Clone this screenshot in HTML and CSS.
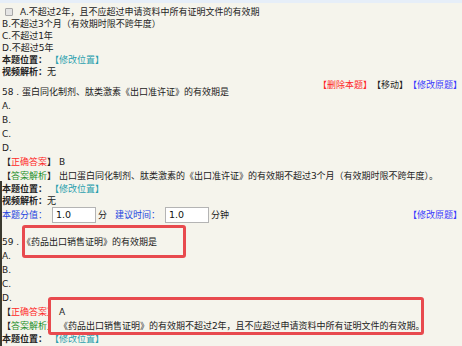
FILE: index.html
```html
<!DOCTYPE html>
<html lang="zh-CN">
<head>
<meta charset="utf-8">
<title>题目</title>
<link rel="stylesheet" href="styles.css">
</head>
<body>
<div class="topbar"></div>
<div class="page">
  <div class="edge"></div>

  <div class="row first"><span class="cb"></span>A.不超过2年，且不应超过申请资料中所有证明文件的有效期</div>
  <div class="row r12">B.不超过3个月（有效期时限不跨年度）</div>
  <div class="row r12">C.不超过1年</div>
  <div class="row r12">D.不超过5年</div>
  <div class="row r12"><b class="lbl">本题位置：</b> <span class="teal">【修改位置】</span></div>
  <div class="row r12"><b class="lbl">视频解析：</b>无</div>

  <div class="ops"><span class="red">【删除本题】</span><span>【移动】</span><span class="blue">【修改原题】</span></div>

  <div class="row">58 . 蛋白同化制剂、肽类激素《出口准许证》的有效期是</div>
  <div class="row">A.</div>
  <div class="row">B.</div>
  <div class="row">C.</div>
  <div class="row">D.</div>
  <div class="row">【<span class="red">正确答案</span>】 B</div>
  <div class="row">【<span class="green">答案解析</span>】 出口蛋白同化制剂、肽类激素的《出口准许证》的有效期不超过3个月（有效期时限不跨年度）。</div>
  <div class="row r12"><b class="lbl">本题位置：</b> <span class="teal">【修改位置】</span></div>
  <div class="row r12"><b class="lbl">视频解析：</b>无</div>
  <div class="score">
    <span class="blue-lbl">本题分值：</span>
    <span class="inp">1.0</span>
    <span class="unit">分</span>
    <span class="blue-lbl gap">建议时间：</span>
    <span class="inp">1.0</span>
    <span class="unit">分钟</span>
    <span class="spacer"></span>
    <span class="blue">【修改原题】</span>
  </div>

  <div class="row q59">59 . 《药品出口销售证明》的有效期是</div>
  <div class="row">A.</div>
  <div class="row">B.</div>
  <div class="row">C.</div>
  <div class="row">D.</div>
  <div class="row">【<span class="red">正确答案</span>】 A</div>
  <div class="row">【<span class="green">答案解析</span>】 《药品出口销售证明》的有效期不超过2年，且不应超过申请资料中所有证明文件的有效期。</div>
  <div class="row r12"><b class="lbl">本题位置：</b> <span class="teal">【修改位置】</span></div>

  <div class="mark mark1"></div>
  <div class="mark mark2"></div>
</div>
</body>
</html>
```

FILE: styles.css
```css
html, body {
  margin: 0;
  padding: 0;
  background: #f5f4ec;
}

body {
  width: 462px;
  height: 346px;
  overflow: hidden;
  font-family: "DejaVu Sans", "Noto Sans CJK SC", sans-serif;
  font-size: 9px;
  line-height: 14px;
  color: #222;
}

.topbar {
  height: 3px;
  background: #e6eef8;
}

.page {
  position: relative;
  padding-left: 2px;
  height: 343px;
  overflow: hidden;
}

.edge {
  position: absolute;
  left: 0;
  top: 178px;
  bottom: 0;
  width: 2px;
  background: #3a3a30;
}

.row {
  height: 14px;
  white-space: nowrap;
}

.r12 {
  height: 12px;
  line-height: 12px;
}

.first {
  height: 12px;
  line-height: 12px;
  padding-top: 3px;
  display: flex;
  align-items: center;
}

.cb {
  display: inline-block;
  box-sizing: border-box;
  width: 8px;
  height: 8px;
  margin-left: 3px;
  margin-right: 7px;
  border: 1px solid #a8a8a8;
  border-radius: 1px;
  background: #e4e4e4;
}

.lbl {
  font-weight: bold;
  color: #222;
}

.teal {
  color: #2a9fae;
}

.red {
  color: #ff2626;
}

.blue {
  color: #3b3bff;
}

.green {
  color: #1d8f2a;
}

.ops {
  height: 14px;
  margin-bottom: -7px;
  display: flex;
  justify-content: flex-end;
  white-space: nowrap;
  position: relative;
}

.score {
  height: 16px;
  display: flex;
  align-items: center;
  white-space: nowrap;
}

.blue-lbl {
  color: #2244e0;
}

.gap {
  margin-left: 8px;
}

.inp {
  box-sizing: border-box;
  width: 44px;
  height: 16px;
  line-height: 14px;
  margin-left: 5px;
  margin-right: 2px;
  padding-left: 3px;
  border: 1px solid #b4b4b4;
  background: #fff;
  color: #111;
  font-size: 9.5px;
}

.unit {
  color: #222;
}

.spacer {
  flex: 1;
}

.q59 {
  margin-top: 12px;
}

.mark {
  position: absolute;
  box-sizing: border-box;
  border: 3px solid #e84a4e;
  border-radius: 3px;
}

.mark1 {
  left: 22px;
  top: 222px;
  width: 164px;
  height: 33px;
}

.mark2 {
  left: 48px;
  top: 294px;
  width: 376px;
  height: 38px;
}
```
